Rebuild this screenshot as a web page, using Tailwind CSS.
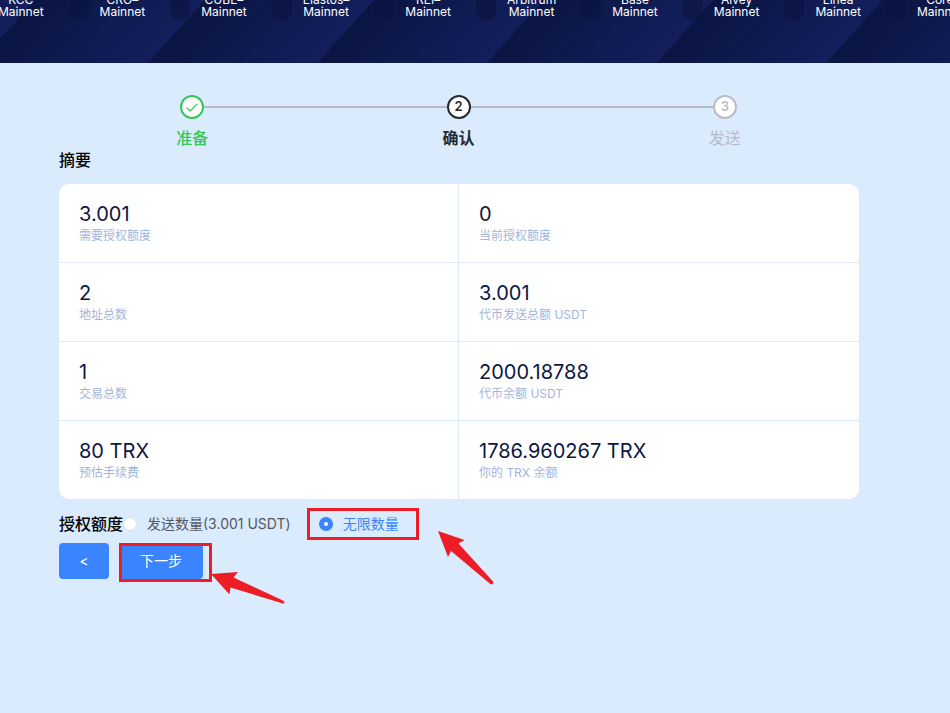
<!DOCTYPE html>
<html lang="zh-CN">
<head>
<meta charset="utf-8">
<meta name="viewport" content="width=device-width, initial-scale=1">
<title>授权额度</title>
<script src="https://cdn.jsdelivr.net/npm/@tailwindcss/browser@4"></script>
</head>
<body class="min-h-screen overflow-x-hidden bg-[#dbebfe] font-['Inter','Noto_Sans_CJK_SC',sans-serif] text-black">
<header class="overflow-hidden bg-[repeating-linear-gradient(132deg,#0b1542_26px,#121f5c_152px)] pb-[42px]">
  <ul class="-mt-1.5 -ml-[33px] flex text-center text-xs leading-3 text-white [font-variant-ligatures:no-contextual]">
    <li class="flex shrink-0"><span class="h-[27px] w-5 rounded-b-full bg-[#0b1440]/70"></span><span class="pr-[25px] pl-[11px]">KCC<br>Mainnet</span></li>
    <li class="flex shrink-0"><span class="h-[27px] w-5 rounded-b-full bg-[#0b1440]/70"></span><span class="pr-[25px] pl-[11px]">CRO–<br>Mainnet</span></li>
    <li class="flex shrink-0"><span class="h-[27px] w-5 rounded-b-full bg-[#0b1440]/70"></span><span class="pr-[25px] pl-[11px]">CUBE–<br>Mainnet</span></li>
    <li class="flex shrink-0"><span class="h-[27px] w-5 rounded-b-full bg-[#0b1440]/70"></span><span class="pr-[25px] pl-[11px]">Elastos–<br>Mainnet</span></li>
    <li class="flex shrink-0"><span class="h-[27px] w-5 rounded-b-full bg-[#0b1440]/70"></span><span class="pr-[25px] pl-[11px]">REI–<br>Mainnet</span></li>
    <li class="flex shrink-0"><span class="h-[27px] w-5 rounded-b-full bg-[#0b1440]/70"></span><span class="pr-[25px] pl-[11px]">Arbitrum<br>Mainnet</span></li>
    <li class="flex shrink-0"><span class="h-[27px] w-5 rounded-b-full bg-[#0b1440]/70"></span><span class="pr-[25px] pl-[11px]">Base<br>Mainnet</span></li>
    <li class="flex shrink-0"><span class="h-[27px] w-5 rounded-b-full bg-[#0b1440]/70"></span><span class="pr-[25px] pl-[11px]">Alvey<br>Mainnet</span></li>
    <li class="flex shrink-0"><span class="h-[27px] w-5 rounded-b-full bg-[#0b1440]/70"></span><span class="pr-[25px] pl-[11px]">Linea<br>Mainnet</span></li>
    <li class="flex shrink-0"><span class="h-[27px] w-5 rounded-b-full bg-[#0b1440]/70"></span><span class="pr-[25px] pl-[11px]">Core<br>Mainnet</span></li>
  </ul>
</header>

<main class="pt-8 pr-[91px] pb-10 pl-[59px]">
  <ol class="mr-px grid grid-cols-3 text-center font-medium">
    <li class="text-[#34c759]">
      <div class="flex items-center">
        <span class="flex-1"></span>
        <span class="flex size-6 items-center justify-center rounded-full border-2 border-current bg-white">
          <svg class="size-4" viewBox="0 0 16 16" fill="none" stroke="currentColor" stroke-width="1.2" stroke-linecap="round" stroke-linejoin="round" aria-hidden="true"><path d="M3 8.8 6.2 12 13 5.2"/></svg>
        </span>
        <span class="h-0.5 flex-1 bg-[#b8bbc6]"></span>
      </div>
      <div class="leading-[38px]">准备</div>
    </li>
    <li class="text-[#252a30]">
      <div class="flex items-center">
        <span class="h-0.5 flex-1 bg-[#b8bbc6]"></span>
        <span class="flex size-6 items-center justify-center rounded-full border-2 border-current bg-white text-[13px] font-semibold">2</span>
        <span class="h-0.5 flex-1 bg-[#b8bbc6]"></span>
      </div>
      <div class="font-bold leading-[38px]">确认</div>
    </li>
    <li class="text-[#b8bbc8]">
      <div class="flex items-center">
        <span class="h-0.5 flex-1 bg-[#b8bbc6]"></span>
        <span class="flex size-6 items-center justify-center rounded-full border-2 border-current bg-white text-[13px] font-semibold">3</span>
        <span class="flex-1"></span>
      </div>
      <div class="font-normal leading-[38px]">发送</div>
    </li>
  </ol>

  <h2 class="-mt-2 mb-3 font-medium leading-[23px]">摘要</h2>

  <dl class="grid grid-cols-2 overflow-hidden rounded-[10px] bg-white">
    <div class="flex flex-col-reverse border-r border-b border-[#dbebfe] px-5 pt-4 pb-[18px]"><dt class="text-xs leading-4 text-[#a3b5dc]">需要授权额度</dt><dd class="text-xl leading-7 text-[#0c1745]">3.001</dd></div>
    <div class="flex flex-col-reverse border-b border-[#dbebfe] px-5 pt-4 pb-[18px]"><dt class="text-xs leading-4 text-[#a3b5dc]">当前授权额度</dt><dd class="text-xl leading-7 text-[#0c1745]">0</dd></div>
    <div class="flex flex-col-reverse border-r border-b border-[#dbebfe] px-5 pt-4 pb-[18px]"><dt class="text-xs leading-4 text-[#a3b5dc]">地址总数</dt><dd class="text-xl leading-7 text-[#0c1745]">2</dd></div>
    <div class="flex flex-col-reverse border-b border-[#dbebfe] px-5 pt-4 pb-[18px]"><dt class="text-xs leading-4 text-[#a3b5dc]">代币发送总额 USDT</dt><dd class="text-xl leading-7 text-[#0c1745]">3.001</dd></div>
    <div class="flex flex-col-reverse border-r border-b border-[#dbebfe] px-5 pt-4 pb-[18px]"><dt class="text-xs leading-4 text-[#a3b5dc]">交易总数</dt><dd class="text-xl leading-7 text-[#0c1745]">1</dd></div>
    <div class="flex flex-col-reverse border-b border-[#dbebfe] px-5 pt-4 pb-[18px]"><dt class="text-xs leading-4 text-[#a3b5dc]">代币余额 USDT</dt><dd class="text-xl leading-7 text-[#0c1745]">2000.18788</dd></div>
    <div class="flex flex-col-reverse border-r border-[#dbebfe] px-5 pt-4 pb-[18px]"><dt class="text-xs leading-4 text-[#a3b5dc]">预估手续费</dt><dd class="text-xl leading-7 text-[#0c1745]">80 TRX</dd></div>
    <div class="flex flex-col-reverse px-5 pt-4 pb-[18px]"><dt class="text-xs leading-4 text-[#a3b5dc]">你的 TRX 余额</dt><dd class="text-xl leading-7 text-[#0c1745]">1786.960267 TRX</dd></div>
  </dl>

  <form>
    <div role="radiogroup" aria-labelledby="amount-title" class="mt-[9px] flex h-8 items-center text-sm">
      <span id="amount-title" class="text-base font-medium">授权额度</span>
      <input id="amount-exact" type="radio" name="amount" class="size-3.5 appearance-none rounded-full border border-[#dcdfe6] bg-white checked:border-5 checked:border-[#3a84ff]">
      <label for="amount-exact" class="pl-2.5 text-[#55585e]">发送数量(3.001 USDT)</label>
      <div class="relative ml-4 flex h-8 items-center border-[3px] border-[#ee1c25] pr-[17px] pl-[9px]">
        <input id="amount-max" type="radio" name="amount" checked class="size-3.5 appearance-none rounded-full border border-[#dcdfe6] bg-white checked:border-5 checked:border-[#3a84ff]">
        <label for="amount-max" class="pl-2.5 text-[#3a84ff]">无限数量</label>
        <svg class="absolute top-[18px] left-[127px] h-[60px] w-[60px]" viewBox="0 0 60 60" fill="#ee1c25" aria-hidden="true"><path d="M1 2 27.5 11 21.5 14.5 56 52.5Q57 55 54 55.5L14 22 11 28Z"/></svg>
      </div>
    </div>
    <div class="mt-[3px] flex gap-2.5 text-sm text-white">
      <button type="button" aria-label="上一步" class="h-9 w-[50px] rounded bg-[#3a84ff]">&lt;</button>
      <div class="relative h-9">
        <button type="submit" class="h-9 w-[84px] rounded bg-[#3a84ff]">下一步</button>
        <span class="pointer-events-none absolute top-0 left-0 h-[39px] w-[93px] border-[3px] border-[#ee1c25]"></span>
        <svg class="absolute top-[26px] left-[91px] h-[36px] w-[78px]" viewBox="0 0 78 36" fill="#ee1c25" aria-hidden="true"><path d="M1 5 28 3 23.5 8.5 73 31.5Q76 34 73 34.5L20.5 18.5 19.5 25.5Z"/></svg>
      </div>
    </div>
  </form>
</main>
</body>
</html>
